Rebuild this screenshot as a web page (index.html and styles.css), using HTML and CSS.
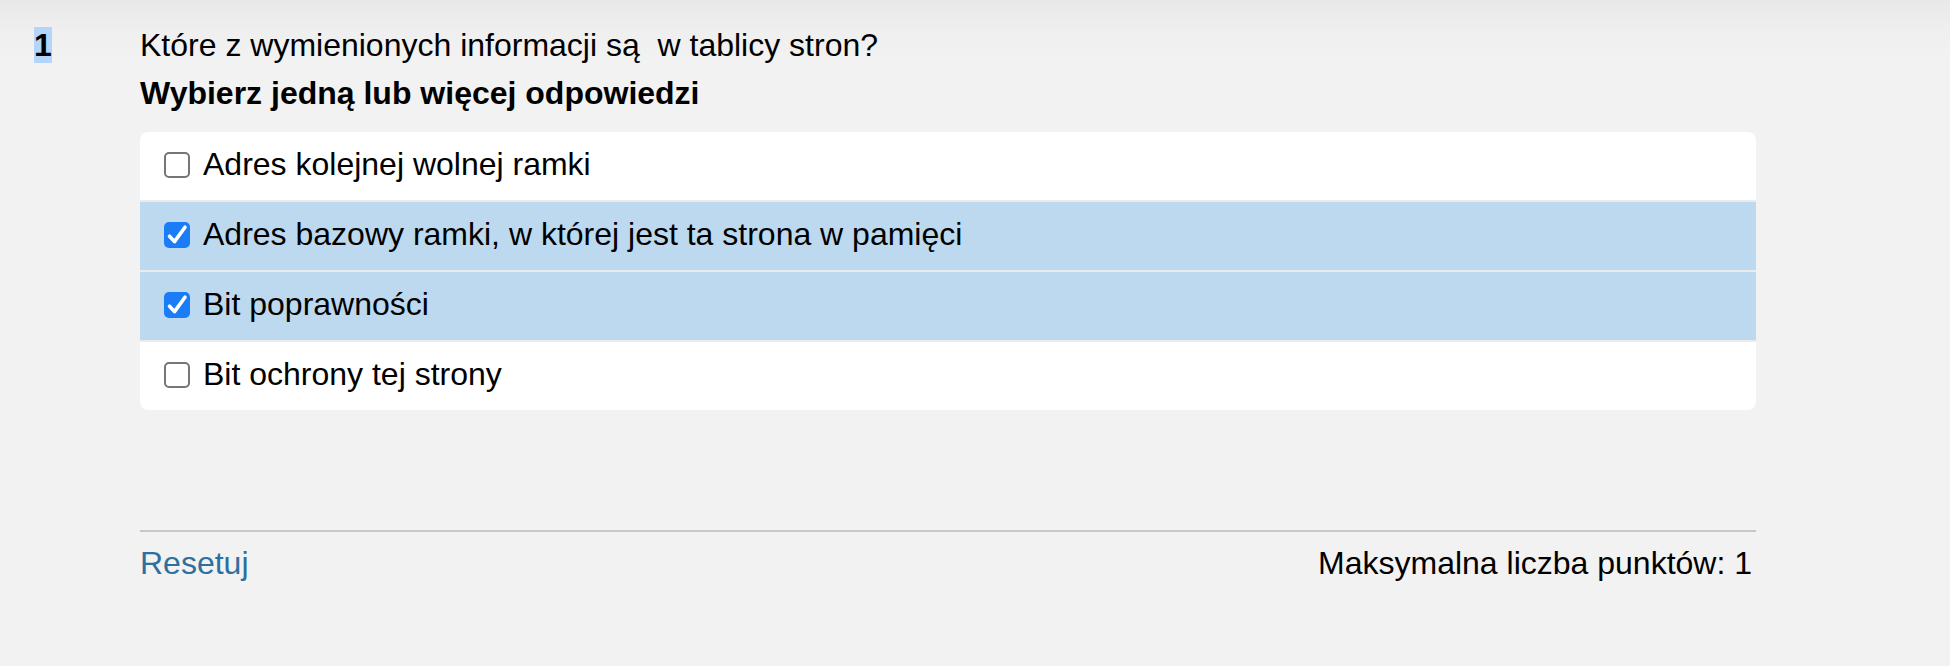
FILE: index.html
```html
<!DOCTYPE html>
<html lang="pl">
<head>
<meta charset="utf-8">
<title>Pytanie 1</title>
<link rel="stylesheet" href="styles.css">
</head>
<body>
<div class="page">
  <div class="question">
    <div class="qno"><span class="sel">1</span></div>
    <div class="qcontent">
      <div class="qtext">Które z wymienionych informacji są&nbsp; w tablicy stron?</div>
      <div class="prompt">Wybierz jedną lub więcej odpowiedzi</div>
      <div class="answers">
        <label class="answer">
          <span class="box"></span>
          <span class="label">Adres kolejnej wolnej ramki</span>
        </label>
        <label class="answer checked">
          <span class="box on"><svg viewBox="0 0 26 26" width="26" height="26"><path d="M5.5 14.2 L10.5 19.6 L21 5.2" fill="none" stroke="#fff" stroke-width="3.6" stroke-linecap="round" stroke-linejoin="round"/></svg></span>
          <span class="label">Adres bazowy ramki, w której jest ta strona w pamięci</span>
        </label>
        <label class="answer checked">
          <span class="box on"><svg viewBox="0 0 26 26" width="26" height="26"><path d="M5.5 14.2 L10.5 19.6 L21 5.2" fill="none" stroke="#fff" stroke-width="3.6" stroke-linecap="round" stroke-linejoin="round"/></svg></span>
          <span class="label">Bit poprawności</span>
        </label>
        <label class="answer">
          <span class="box"></span>
          <span class="label">Bit ochrony tej strony</span>
        </label>
      </div>
      <div class="footer">
        <a class="reset" href="#">Resetuj</a>
        <span class="maxpts">Maksymalna liczba punktów: 1</span>
      </div>
    </div>
  </div>
</div>
</body>
</html>
```
FILE: styles.css
```css
html, body {
  margin: 0;
  padding: 0;
}
body {
  width: 1950px;
  height: 666px;
  background: #f2f2f2 linear-gradient(to bottom, #e8e8e8 0px, #efefef 30px, #f2f2f2 60px) no-repeat;
  font-family: "Liberation Sans", Arial, sans-serif;
  font-size: 32px;
  line-height: 48px;
  color: #000;
  overflow: hidden;
}
.page {
  padding: 21px 194px 0 34px;
}
.question {
  display: flex;
}
.qno {
  width: 106px;
  flex: none;
  font-weight: bold;
}
.sel {
  background: #b3d5fc;
}
.qcontent {
  flex: 1;
}
.prompt {
  font-weight: bold;
  margin-bottom: 15px;
}
.answers {
  background: #ebebeb;
  border-radius: 8px;
  overflow: hidden;
  display: flex;
  flex-direction: column;
  gap: 2px;
}
.answer {
  display: flex;
  align-items: center;
  height: 68px;
  box-sizing: border-box;
  padding: 8px 24px 12px 24px;
  background: #fff;
}
.answer.checked {
  background: #bdd9ef;
}
.box {
  width: 26px;
  height: 26px;
  box-sizing: border-box;
  border: 2px solid #767676;
  border-radius: 5px;
  background: #fff;
  flex: none;
  margin-right: 13px;
  position: relative;
  top: 1px;
}
.box.on {
  border: none;
  background: #1a7cf6;
}
.box svg {
  display: block;
}
.footer {
  margin-top: 120px;
  border-top: 2px solid #c8c8c8;
  padding-top: 7px;
  display: flex;
  justify-content: space-between;
}
.reset {
  color: #2e6f9e;
  text-decoration: none;
}
.maxpts {
  padding-right: 4px;
}
```
